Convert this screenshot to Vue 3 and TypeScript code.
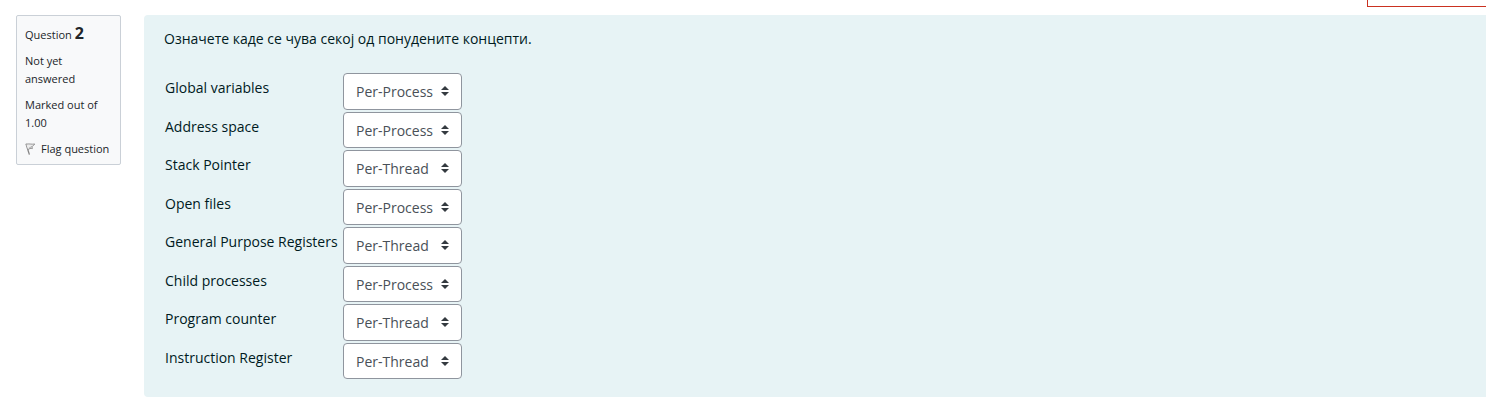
<script setup lang="ts">
import { ref } from 'vue'

interface Concept {
  id: string
  label: string
  answer: string
}

const options: string[] = ['Per-Process', 'Per-Thread']

const concepts = ref<Concept[]>([
  { id: 'globals', label: 'Global variables', answer: 'Per-Process' },
  { id: 'address', label: 'Address space', answer: 'Per-Process' },
  { id: 'stack', label: 'Stack Pointer', answer: 'Per-Thread' },
  { id: 'files', label: 'Open files', answer: 'Per-Process' },
  { id: 'registers', label: 'General Purpose Registers', answer: 'Per-Thread' },
  { id: 'children', label: 'Child processes', answer: 'Per-Process' },
  { id: 'counter', label: 'Program counter', answer: 'Per-Thread' },
  { id: 'instruction', label: 'Instruction Register', answer: 'Per-Thread' },
])
</script>

<template>
  <div class="page">
    <header class="top"><div class="notice"></div></header>
    <main class="question">
      <aside class="info">
        <h3 class="number">Question <strong>2</strong></h3>
        <p class="state">Not yet answered</p>
        <p class="grade">Marked out of 1.00</p>
        <button type="button" class="flag">
          <svg class="flag-icon" viewBox="0 0 12 12" aria-hidden="true">
            <path d="M1 0.8 L4.4 11.6" fill="none" stroke="#858585" stroke-width="1.3" />
            <path d="M1.2 1.2 C4 0.4 6 1.6 9.8 1 L7 3.8 L7.4 5.6 C5.6 5.2 4.4 5.6 3 6.6" fill="#ececec" stroke="#8c8c8c" stroke-width="0.9" />
            <path d="M4 5.2 L7 3.4" fill="none" stroke="#a0a0a0" stroke-width="0.8" />
          </svg>
          <span>Flag question</span>
        </button>
      </aside>
      <section class="content">
        <p class="prompt">Означете каде се чува секој од понудените концепти.</p>
        <div class="answers">
          <template v-for="c in concepts" :key="c.id">
            <label class="label" :for="c.id">{{ c.label }}</label>
            <div class="control">
              <select :id="c.id" v-model="c.answer" class="select">
                <option v-for="o in options" :key="o" :value="o">{{ o }}</option>
              </select>
              <svg class="arrows" viewBox="0 0 8 10" aria-hidden="true">
                <path d="M4 0 L0 4 H8 Z M4 10 L0 6 H8 Z" fill="#343a40" />
              </svg>
            </div>
          </template>
        </div>
      </section>
    </main>
  </div>
</template>

<style>
body {
  margin: 0;
  background: #fff;
}
</style>

<style scoped>
.page {
  font-family: "Segoe UI", "Open Sans", "Noto Sans", sans-serif;
  font-size: 14px;
  line-height: 22px;
  color: #001a1e;
}
.top {
  display: flex;
  justify-content: flex-end;
  height: 7px;
}
.notice {
  box-sizing: border-box;
  width: 119px;
  border-left: 1px solid #ca3120;
  border-bottom: 1px solid #ca3120;
}
.question {
  display: flex;
  align-items: flex-start;
  gap: 23px;
  padding: 8px 0 5px 16px;
}
.info {
  box-sizing: border-box;
  flex: none;
  width: 105px;
  padding: 8px 8px 6px;
  border: 1px solid #cad0d7;
  border-radius: 2px;
  background: #f8f9fa;
  color: #212529;
  font-size: 11px;
  line-height: 18px;
}
.number {
  margin: 0 0 8px;
  font-size: 11px;
  font-weight: 400;
  line-height: 18px;
}
.number strong {
  font-size: 16px;
}
.state {
  margin: 0 0 8px;
}
.grade {
  margin: 0 0 8px;
}
.flag {
  display: flex;
  align-items: center;
  gap: 4px;
  padding: 0;
  border: 0;
  background: none;
  color: inherit;
  font: inherit;
  white-space: nowrap;
}
.flag-icon {
  width: 12px;
  height: 12px;
}
.content {
  flex: 1;
  padding: 13px 20px 18px;
  border-radius: 4px 0 0 4px;
  background: #e7f3f5;
}
.prompt {
  margin: 0 0 23px;
}
.answers {
  display: grid;
  grid-template-columns: 178px 119px;
  grid-auto-rows: 1fr;
  gap: 2px 1px;
  min-height: 306px;
}
.label {
  padding: 4px 0 0 1px;
  white-space: nowrap;
}
.control {
  display: grid;
  position: relative;
}
.select {
  box-sizing: border-box;
  width: 100%;
  height: 100%;
  margin: 0;
  padding: 2px 24px 0 12px;
  border: 1px solid #8f959e;
  border-radius: 4px;
  appearance: none;
  background: #fff;
  color: #495057;
  font: inherit;
}
.arrows {
  position: absolute;
  top: 50%;
  right: 13px;
  width: 8px;
  height: 10px;
  margin-top: -5px;
  pointer-events: none;
}
</style>
